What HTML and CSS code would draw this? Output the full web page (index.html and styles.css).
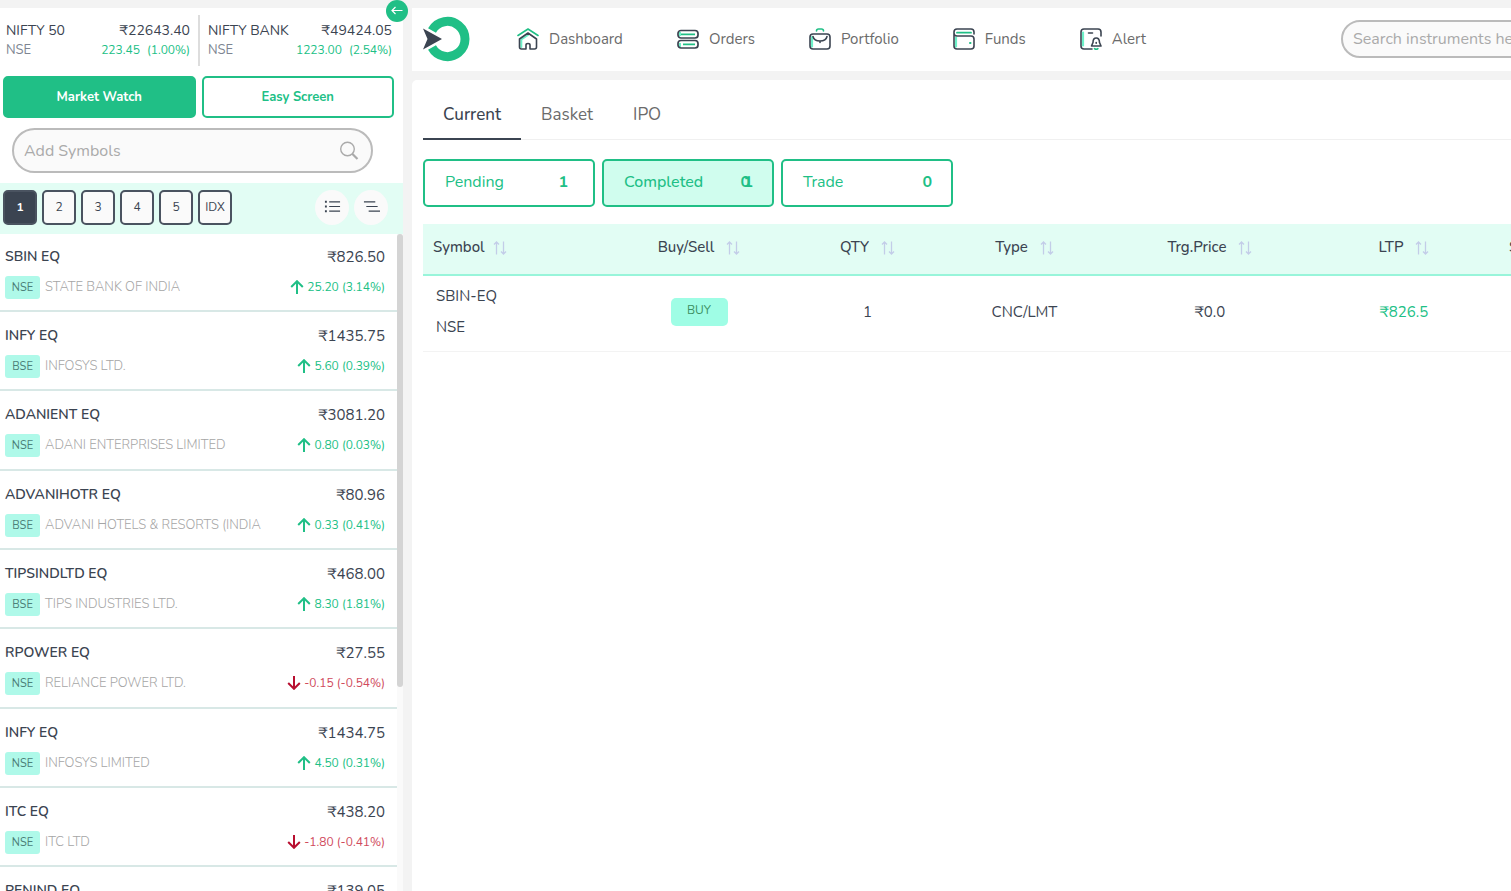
FILE: index.html
```html
<!DOCTYPE html>
<html lang="en">
<head>
<meta charset="utf-8">
<title>Orders</title>
<link rel="stylesheet" href="styles.css">
</head>
<body>
<svg class="defs" aria-hidden="true">
  <symbol id="up" viewBox="0 0 14 14"><path d="M7 14V1.500M1.200 7 7 1.200 12.800 7" fill="none" stroke="currentColor" stroke-width="2"/></symbol>
  <symbol id="down" viewBox="0 0 14 14"><path d="M7 0v12.500M1.200 7 7 12.800 12.800 7" fill="none" stroke="currentColor" stroke-width="2"/></symbol>
  <symbol id="sort" viewBox="0 0 14 14"><path d="M3.500 13.500V1M1 3.500 3.500 1 6 3.500M10.500.5V13M8 10.500l2.500 2.500L13 10.500" fill="none" stroke="currentColor" stroke-width="1.300"/></symbol>
</svg>
<div class="app">
  <aside class="side">
    <button class="collapse" aria-label="Collapse panel"><svg viewBox="0 0 22 22"><path d="M16.500 10.500H6M9.500 7 6 10.500 9.500 14" fill="none" stroke="#fff" stroke-width="1.200"/></svg></button>
    <section class="indices">
      <div class="index"><div class="line"><span>NIFTY 50</span><span>₹22643.40</span></div><div class="line sub"><span>NSE</span><span class="gain"><span>223.45</span><span>(1.00%)</span></span></div></div>
      <div class="index"><div class="line"><span>NIFTY BANK</span><span>₹49424.05</span></div><div class="line sub"><span>NSE</span><span class="gain"><span>1223.00</span><span>(2.54%)</span></span></div></div>
    </section>
    <div class="modes"><button class="mode on">Market Watch</button><button class="mode">Easy Screen</button></div>
    <label class="add"><input type="text" placeholder="Add Symbols" aria-label="Add Symbols"><svg viewBox="0 0 20 20"><circle cx="8.500" cy="8" r="6.800" fill="none" stroke="#aaa" stroke-width="1.400"/><path d="m13.200 12.800 5.300 5.200" stroke="#aaa" stroke-width="2.200"/></svg></label>
    <div class="lists">
      <button class="num on">1</button><button class="num">2</button><button class="num">3</button><button class="num">4</button><button class="num">5</button><button class="num">IDX</button>
      <button class="round first" aria-label="List view"><svg viewBox="0 0 18 18"><path d="M5.500 4H17M5.500 9H17M5.500 14H17" stroke="#3b4451" stroke-width="1.300"/><path d="M1 4h2M1 9h2M1 14h2" stroke="#3b4451" stroke-width="2"/></svg></button>
      <button class="round" aria-label="Sort"><svg viewBox="0 0 18 18"><path d="M1 4h12M3.500 9h12M6 14h12" stroke="#3b4451" stroke-width="1.300"/></svg></button>
    </div>
    <div class="watch">
      <ul class="stocks">
        <li><b>SBIN EQ</b><span class="price">₹826.50</span><span class="co"><i>NSE</i>STATE BANK OF INDIA</span><span class="chg"><svg><use href="#up"/></svg>25.20 (3.14%)</span></li>
        <li><b>INFY EQ</b><span class="price">₹1435.75</span><span class="co"><i>BSE</i>INFOSYS LTD.</span><span class="chg"><svg><use href="#up"/></svg>5.60 (0.39%)</span></li>
        <li><b>ADANIENT EQ</b><span class="price">₹3081.20</span><span class="co"><i>NSE</i>ADANI ENTERPRISES LIMITED</span><span class="chg"><svg><use href="#up"/></svg>0.80 (0.03%)</span></li>
        <li><b>ADVANIHOTR EQ</b><span class="price">₹80.96</span><span class="co"><i>BSE</i>ADVANI HOTELS &amp; RESORTS (INDIA</span><span class="chg"><svg><use href="#up"/></svg>0.33 (0.41%)</span></li>
        <li><b>TIPSINDLTD EQ</b><span class="price">₹468.00</span><span class="co"><i>BSE</i>TIPS INDUSTRIES LTD.</span><span class="chg"><svg><use href="#up"/></svg>8.30 (1.81%)</span></li>
        <li><b>RPOWER EQ</b><span class="price">₹27.55</span><span class="co"><i>NSE</i>RELIANCE POWER LTD.</span><span class="chg loss"><svg><use href="#down"/></svg>-0.15 (-0.54%)</span></li>
        <li><b>INFY EQ</b><span class="price">₹1434.75</span><span class="co"><i>NSE</i>INFOSYS LIMITED</span><span class="chg"><svg><use href="#up"/></svg>4.50 (0.31%)</span></li>
        <li><b>ITC EQ</b><span class="price">₹438.20</span><span class="co"><i>NSE</i>ITC LTD</span><span class="chg loss"><svg><use href="#down"/></svg>-1.80 (-0.41%)</span></li>
        <li><b>PENIND EQ</b><span class="price">₹139.05</span></li>
      </ul>
      <div class="track"><div class="thumb"></div></div>
    </div>
  </aside>
  <div class="content">
    <header class="top">
      <svg class="logo" viewBox="0 0 48 46"><path d="M9 14.500A17.600 17.600 0 1 1 9 31.500" fill="none" stroke="#20bf86" stroke-width="9"/><path d="M0 12.500 19 23 0 33.500l4.500-10.500z" fill="#3b4451" stroke="#fff" stroke-width="4" paint-order="stroke"/></svg>
      <nav class="nav">
        <a href="#"><svg viewBox="0 0 22 22" fill="none" stroke-width="1.600" stroke-linecap="round" stroke-linejoin="round"><path d="M1 7.500 11 1l10 6.500" stroke="#20bf86"/><path d="M4.300 19v-7.500L11 7" stroke="#6df0c8" stroke-width="2"/><path d="M2.500 11 11 5l8.500 6v8q0 2-2 2H13v-4q0-1.500-2-1.500T9 17v4H4.500q-2 0-2-2z" stroke="#3b4451"/></svg>Dashboard</a>
        <a href="#"><svg viewBox="0 0 22 22" fill="none" stroke="#3b4451" stroke-width="1.700"><path d="M3 4v4M3 15v4" stroke="#6df0c8" stroke-width="2"/><rect x="1" y="2.500" width="20" height="7.500" rx="3"/><rect x="1" y="12.500" width="20" height="7.500" rx="3"/><path d="M4 6.300h14M6 16.300h12" stroke="#20bf86" stroke-width="1.800"/></svg>Orders</a>
        <a href="#"><svg viewBox="0 0 22 22" fill="none" stroke="#3b4451" stroke-width="1.600" stroke-linecap="round"><path d="M7.500 3q0-2 2-2h3q2 0 2 2" stroke="#20bf86"/><path d="M3 9v9.500" stroke="#6df0c8" stroke-width="2.200"/><rect x="1" y="6" width="20" height="15" rx="3"/><path d="M4 8.500q1 4.500 7 4.500t7-4.500M11 13v1.500"/></svg>Portfolio</a>
        <a href="#"><svg viewBox="0 0 22 22" fill="none" stroke="#3b4451" stroke-width="1.600" stroke-linecap="round"><path d="M3 9.500v9" stroke="#6df0c8" stroke-width="2.200"/><path d="M21 6V4q0-3-3-3H4Q1 1 1 4v14q0 3 3 3h14q3 0 3-3v-7q0-3-3-3H4Q1 8 1 5"/><path d="M4 4.700h14" stroke="#20bf86" stroke-width="1.800"/><path d="M17 15h.5" stroke="#20bf86" stroke-width="2"/></svg>Funds</a>
        <a href="#"><svg viewBox="0 0 22 22" fill="none" stroke="#3b4451" stroke-width="1.600" stroke-linecap="round" stroke-linejoin="round"><path d="M3 4.500v13" stroke="#6df0c8" stroke-width="2.200"/><path d="M21 8V4q0-3-3-3H4Q1 1 1 4v14q0 3 3 3h8M8.500 5h4"/><path d="M11.500 18 13 14.500q0-4.500 3.200-4.500t3.300 4.500l1.500 3.500z"/><path d="M14.500 20.700q1.700 1.300 3.400 0" stroke="#20bf86"/><path d="M16.200 14.500v.8"/></svg>Alert</a>
      </nav>
      <input class="search" type="search" placeholder="Search instruments here" aria-label="Search instruments">
    </header>
    <main class="panel">
      <nav class="tabs"><a href="#" class="on">Current</a><a href="#">Basket</a><a href="#">IPO</a></nav>
      <div class="filters">
        <button class="pending">Pending<b>1</b></button>
        <button class="on">Completed<b class="pair"><span>0</span><span class="over">1</span></b></button>
        <button>Trade<b>0</b></button>
      </div>
      <table class="orders">
        <colgroup><col class="c1"><col class="c2"><col class="c3"><col class="c4"><col class="c5"><col class="c6"><col></colgroup>
        <thead><tr><th>Symbol<svg><use href="#sort"/></svg></th><th>Buy/Sell<svg><use href="#sort"/></svg></th><th>QTY<svg><use href="#sort"/></svg></th><th>Type<svg><use href="#sort"/></svg></th><th>Trg.Price<svg><use href="#sort"/></svg></th><th>LTP<svg><use href="#sort"/></svg></th><th>Status</th></tr></thead>
        <tbody><tr><td>SBIN-EQ<br>NSE</td><td><span class="buy">BUY</span></td><td>1</td><td>CNC/LMT</td><td>₹0.0</td><td class="gain">₹826.5</td><td></td></tr></tbody>
      </table>
    </main>
  </div>
</div>
</body>
</html>
```
FILE: styles.css
```css
* { box-sizing: border-box; }
html { height: 100%; overflow: hidden; }
body { margin: 0; height: 100%; overflow: hidden; background: #f3f3f3; color: #3b4451; font: 14px/20px Nunito, Lato, "Noto Sans", sans-serif; }
button, input { font: inherit; color: inherit; margin: 0; }
button { padding: 0; cursor: pointer; }
a { color: inherit; text-decoration: none; }
.defs { display: none; }
.app { display: grid; grid-template-columns: 403px minmax(1200px, 1fr); gap: 9px; height: 100%; padding-top: 8px; }
.gain { color: #20bf86; }

.side { position: relative; display: flex; flex-direction: column; min-height: 0; background: #fff; }
.collapse { position: absolute; top: -8px; right: -5px; width: 22px; height: 22px; border: 0; border-radius: 50%; background: #20bf86; }
.collapse svg { display: block; }
.indices { display: grid; grid-template-columns: 199px 1fr; padding-top: 7px; height: 68px; }
.index { height: 51px; padding: 6px 9px 0 6px; }
.index + .index { border-left: 2px solid #ddd; padding: 6px 11px 0 8px; margin-left: -1px; }
.line { display: flex; justify-content: space-between; }
.sub { font-size: 13px; line-height: 18px; color: #7d8591; }
.sub .gain { display: flex; gap: 7px; font-size: 12px; }
.modes { display: grid; grid-template-columns: 1fr 1fr; gap: 6px; padding: 0 9px 0 3px; }
.mode { height: 42px; border: 2px solid #20bf86; border-radius: 5px; background: #fff; color: #20bf86; font-size: 13px; font-weight: 700; }
.mode.on { background: #20bf86; color: #fff; }
.add { display: flex; align-items: center; height: 45px; margin: 10px 30px 10px 12px; padding: 0 12px 0 10px; border: 2px solid #bbb; border-radius: 23px; background: #fafafa; }
.add input { flex: 1; min-width: 0; padding: 0; border: 0; outline: 0; background: none; font-size: 16px; }
.add svg { width: 20px; height: 20px; }
::placeholder { color: #aaa; opacity: 1; }
.lists { display: flex; align-items: center; gap: 5px; height: 51px; padding: 0 15px 2px 3px; background: #e2fdf4; }
.num { width: 34px; height: 35px; padding-bottom: 2px; border: 2px solid #4a5360; border-radius: 5px; background: #fafafa; font-size: 12px; }
.num.on { background: #3b4451; color: #fff; font-weight: 700; }
.round { display: grid; place-items: center; width: 34px; height: 35px; padding-bottom: 3px; border: 0; border-radius: 50%; background: #fafafa; }
.round.first { margin-left: auto; }
.round svg { width: 17px; height: 17px; }
.watch { flex: 1; display: flex; min-height: 0; overflow: hidden; }
.stocks { flex: 1; margin: 0; padding: 0; list-style: none; }
.stocks li { display: grid; grid-template-columns: 1fr auto; grid-template-rows: 31px 30px; align-items: center; height: 79px; padding: 8px 12px 0 5px; border-bottom: 2px solid #d8e8e6; }
.stocks li:first-child { height: 78px; padding-top: 7px; }
.stocks li:nth-child(3n) { height: 80px; }
.stocks b { font-weight: 600; }
.price { text-align: right; font-size: 15px; }
.co { display: flex; align-items: center; gap: 5px; color: #a5a5a5; font-size: 13px; font-weight: 300; }
.co i { width: 35px; height: 23px; border-radius: 3px; background: #aff9e9; color: #4c8078; font-size: 11px; font-style: normal; font-weight: 400; line-height: 23px; text-align: center; }
.chg { display: flex; align-items: center; justify-content: flex-end; gap: 3px; color: #20bf86; font-size: 12px; }
.chg svg { width: 14px; height: 14px; }
.loss { color: #d04a5c; }
.loss svg { color: #b80f30; }
.track { width: 6px; background: #fafafa; }
.thumb { height: 69%; border-radius: 3px; background: #d4d4d4; }

.content { display: flex; flex-direction: column; gap: 9px; min-height: 0; }
.top { display: flex; align-items: center; height: 63px; padding: 0 0 2px 11px; background: #fff; }
.logo { width: 48px; height: 46px; }
.nav { display: flex; gap: 54px; margin-left: 46px; color: #6b6b6b; font-size: 15px; }
.nav a { display: flex; align-items: center; gap: 10px; }
.nav svg { width: 22px; height: 22px; }
.search { width: 271px; height: 38px; margin-left: auto; padding: 0 10px; border: 2px solid #bbb; border-radius: 19px; background: #fafafa; font-size: 16px; }
.panel { flex: 1; padding: 12px 0 0 11px; border-radius: 5px 0 0 0; background: #fff; }
.tabs { display: flex; border-bottom: 1px solid #f0f0f0; font-size: 17px; line-height: 46px; color: #6b6b6b; }
.tabs a { padding: 0 20px; }
.tabs .on { color: #3b4451; font-weight: 500; border-bottom: 2px solid #3b4451; margin-bottom: -1px; }
.filters { display: flex; gap: 7px; margin: 19px 0 17px; }
.filters button { display: flex; justify-content: space-between; width: 172px; height: 48px; padding: 11px 19px 0 20px; align-items: flex-start; border: 2px solid #20bf86; border-radius: 5px; background: #fff; color: #20bf86; font-size: 16px; }
.filters .pending { padding-right: 25px; }
.filters .on { background: #d0fdee; font-weight: 500; }
.pair { position: relative; padding-right: 3px; }
.over { position: absolute; right: 0; top: 0; }
.orders { width: 100%; table-layout: fixed; border-collapse: collapse; text-align: center; }
.c1 { width: 179px; } .c2 { width: 194px; } .c3 { width: 143px; } .c4 { width: 171px; } .c5 { width: 200px; } .c6 { width: 188px; }
.orders th { height: 51px; padding: 0 0 5px; border-bottom: 2px solid #98f5da; background: #e2fdf4; font-size: 15px; font-weight: 500; }
.orders th:first-child { padding-left: 10px; text-align: left; }
.orders th:last-child { padding-left: 11px; text-align: left; }
.orders th svg { width: 14px; height: 14px; margin-left: 12px; color: #c3cde8; vertical-align: -3px; }
.orders th:first-child svg { margin-left: 8px; }
.orders td { height: 76px; padding: 0 0 2px; border-bottom: 1px solid #f3f3f3; font-size: 15px; }
.orders td:first-child { padding-left: 13px; text-align: left; line-height: 31px; }
.buy { display: inline-block; width: 57px; height: 28px; border-radius: 5px; background: #9ffde5; color: #3c8f62; font-size: 12px; line-height: 24px; }
```
